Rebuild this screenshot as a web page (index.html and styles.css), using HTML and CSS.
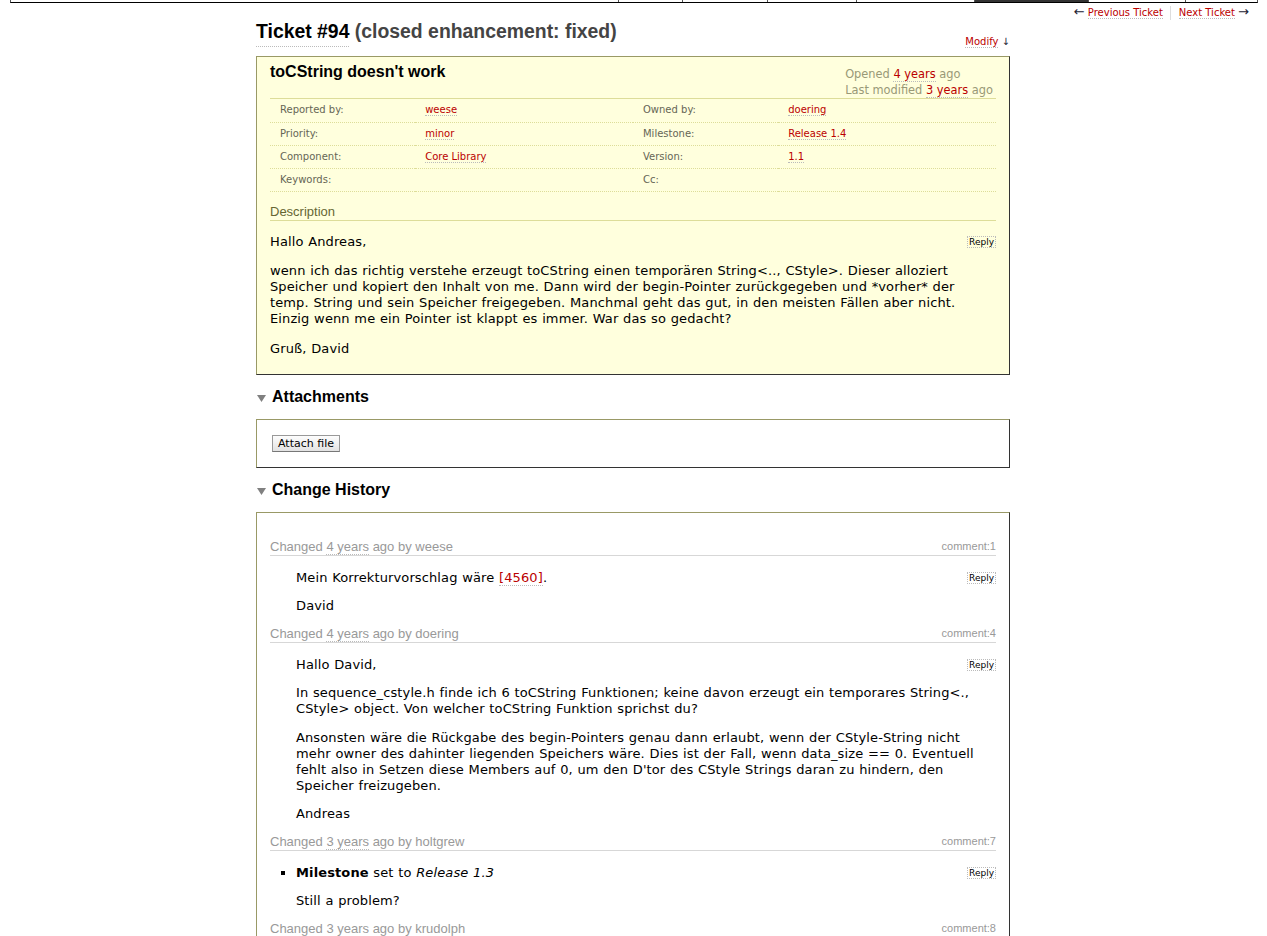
FILE: index.html
```html
<!DOCTYPE html>
<html lang="de">
<head>
<meta charset="utf-8">
<title>#94 (toCString doesn't work)</title>
<link rel="stylesheet" href="styles.css">
</head>
<body>
<div class="mainnav">
  <ul>
    <li class="tab t1"></li>
    <li class="tab t2"></li>
    <li class="tab t3"></li>
    <li class="tab t4"></li>
    <li class="tab t5 active"></li>
    <li class="tab t6"></li>
    <li class="tab t7"></li>
  </ul>
</div>

<ul class="ctxtnav">
  <li><span class="arrow">&larr;</span> <a href="#">Previous Ticket</a></li>
  <li><a href="#">Next Ticket</a> <span class="arrow">&rarr;</span></li>
</ul>

<div class="content">
  <div class="title-row">
    <h1 class="title"><a href="#">Ticket #94</a> <span class="status">(closed enhancement: fixed)</span></h1>
    <div class="modify"><a href="#">Modify</a> <span class="arrow">&darr;</span></div>
  </div>

  <div class="ticket">
    <div class="ticket-head">
      <h2 class="summary">toCString doesn't work</h2>
      <div class="date">
        <p>Opened <a href="#">4 years</a> ago</p>
        <p>Last modified <a href="#">3 years</a> ago</p>
      </div>
    </div>
    <table class="props">
      <colgroup><col class="c-th"><col class="c-td"><col class="c-th"><col class="c-td"></colgroup>
      <tr><th>Reported by:</th><td><a href="#">weese</a></td><th>Owned by:</th><td><a href="#">doering</a></td></tr>
      <tr><th>Priority:</th><td><a href="#">minor</a></td><th>Milestone:</th><td><a href="#">Release 1.4</a></td></tr>
      <tr><th>Component:</th><td><a href="#">Core Library</a></td><th>Version:</th><td><a href="#">1.1</a></td></tr>
      <tr><th>Keywords:</th><td></td><th>Cc:</th><td></td></tr>
    </table>
    <div class="desc">
      <h3>Description</h3>
      <div class="desc-wrap">
        <button class="reply">Reply</button>
        <div class="desc-body">
          <p>Hallo Andreas,</p>
          <p>wenn ich das richtig verstehe erzeugt toCString einen temporären String&lt;.., CStyle&gt;. Dieser alloziert Speicher und kopiert den Inhalt von me. Dann wird der begin-Pointer zurückgegeben und *vorher* der temp. String und sein Speicher freigegeben. Manchmal geht das gut, in den meisten Fällen aber nicht. Einzig wenn me ein Pointer ist klappt es immer. War das so gedacht?</p>
          <p>Gruß, David</p>
        </div>
      </div>
    </div>
  </div>

  <h2 class="foldable"><svg class="fold-icon" width="9" height="7" viewBox="0 0 9 7"><polygon points="0,0 9,0 4.5,7" fill="#808080"/></svg>Attachments</h2>
  <div class="box attachments">
    <button class="attach">Attach file</button>
  </div>

  <h2 class="foldable"><svg class="fold-icon" width="9" height="7" viewBox="0 0 9 7"><polygon points="0,0 9,0 4.5,7" fill="#808080"/></svg>Change History</h2>
  <div class="box changelog">
    <div class="change">
      <h3><span class="threading">comment:1</span>Changed <a href="#">4 years</a> ago by weese</h3>
      <div class="comment-wrap">
        <button class="reply">Reply</button>
        <div class="comment">
          <p>Mein Korrekturvorschlag wäre <a href="#">[4560]</a>.</p>
          <p>David</p>
        </div>
      </div>
    </div>
    <div class="change">
      <h3><span class="threading">comment:4</span>Changed <a href="#">4 years</a> ago by doering</h3>
      <div class="comment-wrap">
        <button class="reply">Reply</button>
        <div class="comment">
          <p>Hallo David,</p>
          <p>In sequence_cstyle.h finde ich 6 toCString Funktionen; keine davon erzeugt ein temporares String&lt;., CStyle&gt; object. Von welcher toCString Funktion sprichst du?</p>
          <p>Ansonsten wäre die Rückgabe des begin-Pointers genau dann erlaubt, wenn der CStyle-String nicht mehr owner des dahinter liegenden Speichers wäre. Dies ist der Fall, wenn data_size == 0. Eventuell fehlt also in Setzen diese Members auf 0, um den D'tor des CStyle Strings daran zu hindern, den Speicher freizugeben.</p>
          <p>Andreas</p>
        </div>
      </div>
    </div>
    <div class="change">
      <h3><span class="threading">comment:7</span>Changed <a href="#">3 years</a> ago by holtgrew</h3>
      <div class="comment-wrap">
        <button class="reply">Reply</button>
        <ul class="changes">
          <li><strong>Milestone</strong> set to <em>Release 1.3</em></li>
        </ul>
        <div class="comment">
          <p>Still a problem?</p>
        </div>
      </div>
    </div>
    <div class="change">
      <h3><span class="threading">comment:8</span>Changed <a href="#">3 years</a> ago by krudolph</h3>
      <div class="comment-wrap">
        <div class="comment">
          <p>&nbsp;</p>
        </div>
      </div>
    </div>
  </div>
</div>
</body>
</html>
```

FILE: styles.css
```css
* { box-sizing: border-box; }

html, body { background: #fff; }

body {
  margin: 0;
  padding-right: 1px;
  color: #000;
  font: 13px/16px "DejaVu Sans", Verdana, sans-serif;
}

a {
  color: #b00;
  text-decoration: none;
  border-bottom: 1px dotted #bbb;
}

/* main navigation (scrolled mostly out of view) */
.mainnav {
  margin: 0 8px 0 10px;
  height: 3px;
  border-left: 1px solid #555;
  border-right: 1px solid #555;
  border-bottom: 1px solid #000;
}
.mainnav ul {
  display: flex;
  justify-content: flex-end;
  margin: 0;
  padding: 0;
  list-style: none;
  height: 2px;
}
.mainnav .tab { height: 2px; border-left: 1px solid #555; }
.mainnav .t1 { width: 64px; }
.mainnav .t2 { width: 85px; }
.mainnav .t3 { width: 89px; }
.mainnav .t4 { width: 118px; }
.mainnav .t5 { width: 114px; }
.mainnav .t6 { width: 97px; }
.mainnav .t7 { width: 72px; }
.mainnav .active { background: #333; }

/* context navigation */
.ctxtnav {
  display: flex;
  justify-content: flex-end;
  list-style: none;
  margin: 2.5px 17px 0 0;
  padding: 0;
  font-size: 10px;
  line-height: 14px;
}
.ctxtnav li { padding: 0 7.5px; border-left: 1px solid #ddd; height: 14px; }
.ctxtnav li:first-child { border-left: 0; }
.ctxtnav li:last-child { padding-right: 0; }
.ctxtnav .arrow { font-size: 13px; line-height: 10px; }
.arrow { color: #223; }

/* content column */
.content {
  width: 754px;
  margin: 1px auto 40px;
}

.title-row {
  display: flex;
  justify-content: space-between;
  align-items: flex-start;
}
.title {
  margin: 0;
  font: bold 19.4px/20px "Liberation Sans", Arial, sans-serif;
  color: #000;
}
.title a { color: #000; padding-bottom: 4px; }
.status { color: #444; }
.modify {
  margin-top: 14px;
  font-size: 10px;
  line-height: 14px;
}

/* ticket box */
.ticket {
  margin-top: 7.5px;
  background: #ffd;
  border: 1px solid;
  border-color: #996 #333 #333 #996;
  padding: 7px 13px 3.5px;
}
.ticket-head {
  display: flex;
  justify-content: space-between;
  align-items: flex-start;
  border-bottom: 1px solid #dd9;
}
.summary {
  margin: 0;
  font: bold 16px/16px "Liberation Sans", Arial, sans-serif;
}
.date {
  margin: 2px 3px 0 0;
  color: #997;
  font-size: 11.4px;
  line-height: 16px;
  text-align: left;
}
.date p { margin: 0; }

.props {
  width: 100%;
  border-collapse: collapse;
  table-layout: fixed;
  font-size: 10px;
  line-height: 12px;
}
.props .c-th { width: 20%; }
.props .c-td { width: 30%; }
.props th, .props td {
  height: 23px;
  padding: 0 0 0 10px;
  border-bottom: 1px dotted #dd9;
  text-align: left;
  vertical-align: middle;
  font-weight: normal;
}
.props th { color: #665; }

.desc h3 {
  margin: 12px 0 0;
  font: 13px/16px "Liberation Sans", Arial, sans-serif;
  color: #663;
  border-bottom: 1px solid #dd9;
}
.desc-wrap { padding-top: 0.5px; }
.desc-body p,
.comment p {
  margin: 12.5px 0;
  letter-spacing: 0.12px;
  word-spacing: 0.4px;
}
.desc-body p { margin: 13.5px 0; }
.desc-body p:first-child { margin-top: 12.5px; }
.comment p:last-child { margin-bottom: 11.5px; }

.comment-wrap { padding-top: 1.5px; }

.reply {
  float: right;
  margin-top: 15px;
  height: 12px;
  padding: 0 1px;
  border: 1px dotted #bbb;
  background: transparent;
  color: #000;
  font: 9px/10px "DejaVu Sans", Verdana, sans-serif;
}
.desc-wrap .reply { margin-top: 14.5px; }

/* section headings */
.foldable {
  margin: 12px 0 13px;
  font: bold 16px/19px "Liberation Sans", Arial, sans-serif;
  color: #000;
}
.fold-icon { margin: 0 6px 0 1px; }

.box {
  border: 1px solid;
  border-color: #996 #333 #333 #996;
}

.attachments { padding: 15px 15px 15.5px; }
.attach {
  height: 17px;
  padding: 0 5px;
  border: 1px solid #999;
  border-bottom-color: #777;
  background: linear-gradient(#fdfdfd, #e2e2e2);
  color: #000;
  font: 11px/15px "DejaVu Sans", Verdana, sans-serif;
}

.changelog { padding: 25.5px 13px 1px; }
.change h3 {
  margin: 0;
  font: 13px/16px "Liberation Sans", Arial, sans-serif;
  color: #999;
  border-bottom: 1px solid #d7d7d7;
}
.change h3 a { color: #999; }
.threading { float: right; font-size: 11px; line-height: 14px; }

.comment { margin-left: 26px; }
.changes {
  margin: 12.5px 0 0 26px;
  padding: 0;
  list-style: square;
  letter-spacing: 0.12px;
  word-spacing: 0.4px;
}
```
